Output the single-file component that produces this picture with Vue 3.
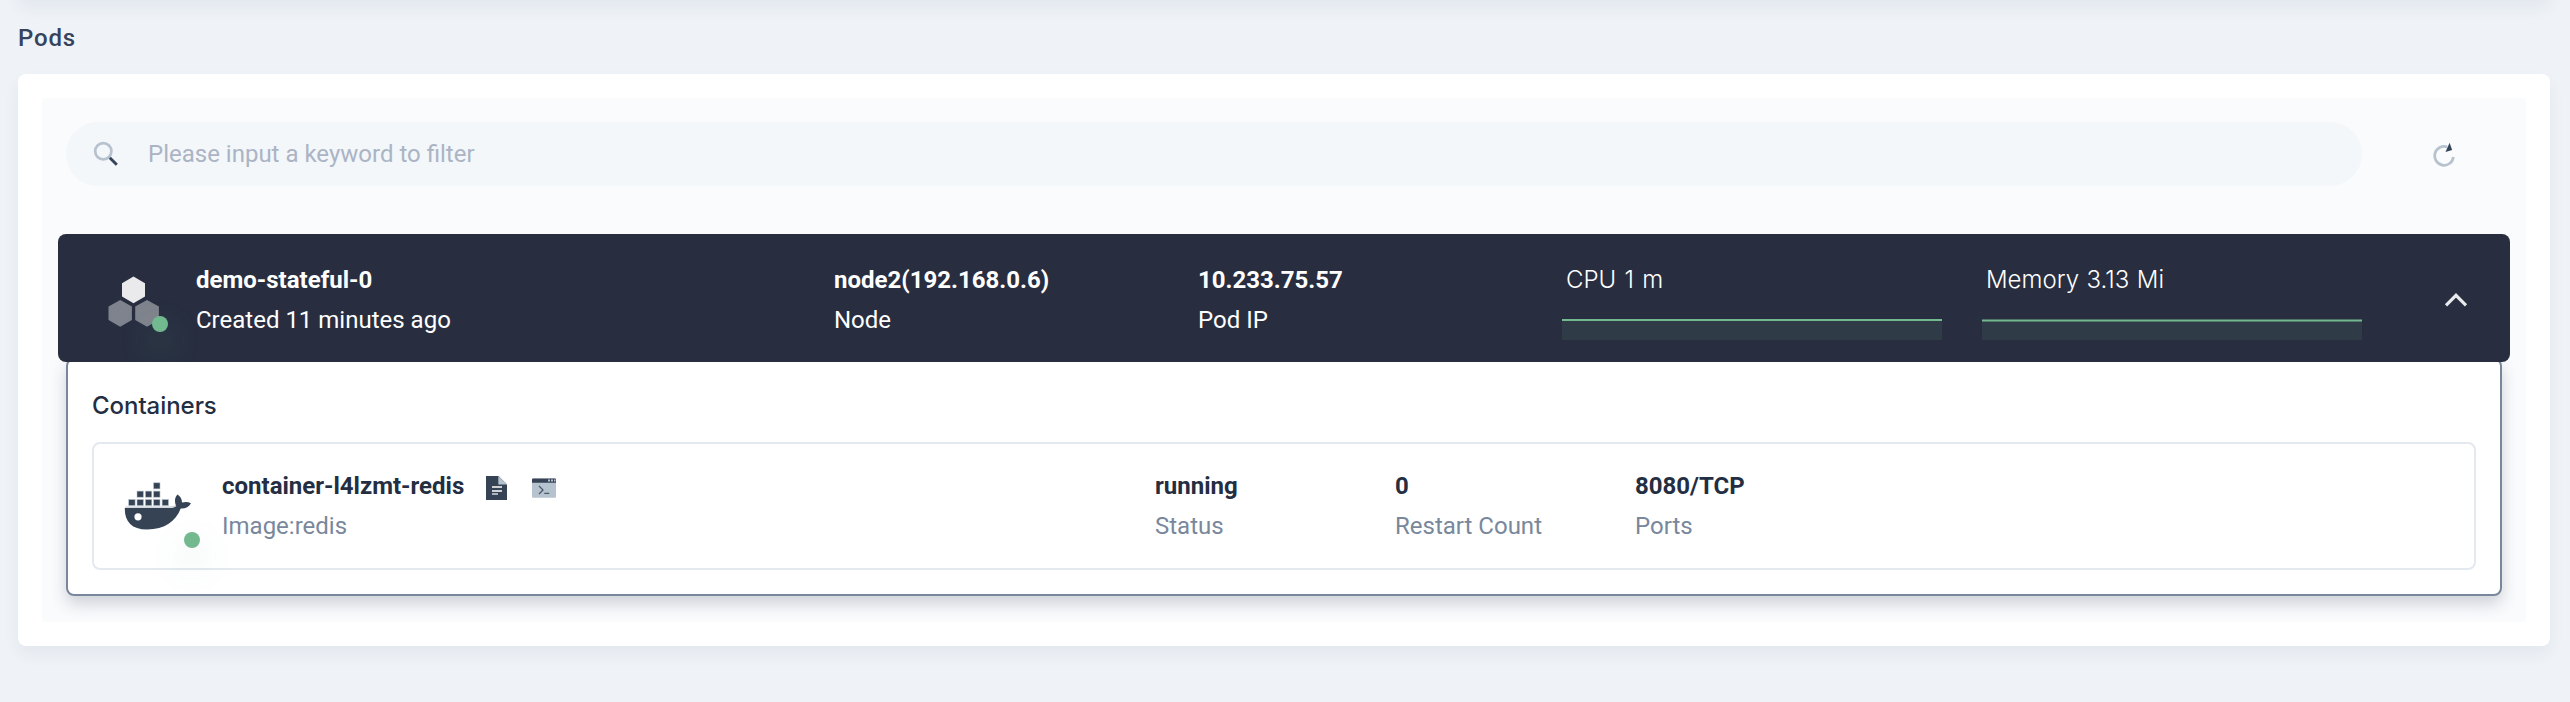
<script setup>
const containerStats = [
  { value: 'running', label: 'Status' },
  { value: '0', label: 'Restart Count' },
  { value: '8080/TCP', label: 'Ports' },
]
const boxes = [
  [153.6, 482.8],
  [137, 491.1], [145.4, 491.1], [153.6, 491.1],
  [128.7, 499.5], [137, 499.5], [145.4, 499.5], [153.6, 499.5], [162.1, 499.5],
]
</script>

<template>
  <div class="page">
    <div class="previous-card"></div>
    <h3 class="title">Pods</h3>
    <section class="card">
      <div class="body">
        <div class="toolbar">
          <div class="search">
            <svg class="search-icon" viewBox="90 138 32 32">
              <circle cx="103.3" cy="151.3" r="8.1" fill="none" stroke="#b6c2cd" stroke-width="2.7" />
              <path d="M109.8 157.8l7 7" stroke="#324558" stroke-width="2.9" fill="none" />
            </svg>
            <span class="placeholder">Please input a keyword to filter</span>
          </div>
          <svg class="refresh" viewBox="2428 138 32 32">
            <path d="M2453.4 157a9.4 9.4 0 1 1-6.2-10" fill="none" stroke="#b6c2cd" stroke-width="2.7" />
            <path d="M2449.6 142.8l2.5 7.3-6.6 1.9z" fill="#324558" />
          </svg>
        </div>

        <div class="pod-row">
          <div class="pod-icon">
            <svg viewBox="108 276 52 52">
              <path d="M133.5 276.6l11.5 6.6v13.2l-11.5 6.8-11.5-6.8v-13.2z" fill="#eaeaec" />
              <path d="M120.2 300l11.7 6.6v13.3l-11.7 6.8-11.7-6.8v-13.3z" fill="#7f838d" />
              <path d="M147 300l11.9 6.6v13.3l-11.9 6.8-11.8-6.8v-13.3z" fill="#7f838d" />
            </svg>
            <i class="dot"></i>
          </div>
          <div class="cell name"><strong>demo-stateful-0</strong><p>Created 11 minutes ago</p></div>
          <div class="cell node"><strong>node2(192.168.0.6)</strong><p>Node</p></div>
          <div class="cell ip"><strong>10.233.75.57</strong><p>Pod IP</p></div>
          <div class="metric">
            <span class="metric-label cpu">CPU 1 m</span>
            <svg class="chart" viewBox="0 0 380 22">
              <path d="M0 2h380v19H0z" fill="#2f3b46" />
              <path d="M0 1h380" stroke="#73b98f" stroke-width="2" />
            </svg>
          </div>
          <div class="metric">
            <span class="metric-label memory">Memory 3.13 Mi</span>
            <svg class="chart" viewBox="0 0 380 22">
              <path d="M0 2h380v19H0z" fill="#2f3b46" />
              <path d="M0 1.5h380" stroke="#73b98f" stroke-width="2" />
            </svg>
          </div>
          <svg class="chevron" viewBox="0 0 24 16">
            <path d="M2 13.4L12 3.3l10 10.1" fill="none" stroke="#eaeaec" stroke-width="3.1" />
          </svg>
        </div>

        <div class="details">
          <h4 class="subtitle">Containers</h4>
          <div class="container-row">
            <div class="docker">
              <svg viewBox="120 474 80 64">
                <rect v-for="(b, i) in boxes" :key="i" :x="b[0]" :y="b[1]" width="6.4" height="6.1" fill="#364355" stroke="#b6c2cd" stroke-width=".6" />
                <path d="M125.4 507.2H169c3 0 5.3-.6 7.2-1.8" fill="none" stroke="#c3ccd5" stroke-width="1.2" />
                <path d="M124.8 508.1H169.5c2.7 0 5-.6 6.8-1.9-1.9-3.9-2-8 1.1-11.6 3 1.9 4.7 4.7 4.6 8 3-.9 6-.9 9 .6-1.9 3.8-5.6 5.5-10.3 5.3C175.5 521.5 165 529.3 147 529.4c-15.5 0-22.5-8-22.2-21.3z" fill="#364355" />
                <circle cx="138" cy="516.8" r="3.6" fill="#fff" />
              </svg>
              <i class="dot"></i>
            </div>
            <div class="container-name">
              <div class="name-line">
                <strong>container-l4lzmt-redis</strong>
                <svg class="doc" viewBox="0 0 21 24">
                  <path d="M0 0h12.5L21 8.5V24H0z" fill="#364355" />
                  <path d="M12.3 0L21 8.6h-8.7z" fill="#b6c2cd" />
                  <path d="M6 10.9h10M6 14.9h10" stroke="#fff" stroke-width="1.5" />
                  <path d="M6 18h6" stroke="#b6c2cd" stroke-width="1.8" />
                </svg>
                <svg class="terminal" viewBox="0 0 24 20">
                  <rect width="24" height="19.3" y=".4" rx="1" fill="#b6c2cd" />
                  <path d="M0 4.7V1.4Q0 .4 1 .4h22q1 0 1 1v3.3z" fill="#364355" />
                  <path d="M16 2.6h2m1 0h2m1 0h1.5" stroke="#b6c2cd" stroke-width="2" />
                  <path d="M7 8l4 4-4 4M12.3 15.3h4.9" fill="none" stroke="#4a5a6b" stroke-width="1.3" />
                </svg>
              </div>
              <p>Image:redis</p>
            </div>
            <div v-for="s in containerStats" :key="s.label" class="stat">
              <strong>{{ s.value }}</strong>
              <p>{{ s.label }}</p>
            </div>
          </div>
        </div>
      </div>
    </section>
  </div>
</template>

<style>
body { background: #eff3f8; }
</style>

<style scoped>
* { box-sizing: border-box; }
.page {
  height: 702px;
  padding: 0 20px 0 18px;
  overflow: hidden;
  background: #eff3f8;
  font: 24px/40px Roboto, "Liberation Sans", sans-serif;
  color: #242e42;
}
p, h3, h4 { margin: 0; }
p { white-space: nowrap; }
svg { display: block; flex: none; }
strong { display: block; font-weight: 700; white-space: nowrap; }
.previous-card {
  height: 60px;
  margin-top: -60px;
  border-radius: 8px;
  background: #fff;
  box-shadow: 0 8px 16px rgba(36, 46, 66, .06);
}
.title { height: 74px; padding-top: 18px; font-size: 24px; font-weight: 500; color: #36435c; letter-spacing: .8px; }
.card {
  height: 572px;
  padding: 24px;
  border-radius: 8px;
  background: #fff;
  box-shadow: 0 8px 16px rgba(36, 46, 66, .06);
}
.body { height: 524px; padding: 24px 16px 0; background: #fafbfd; overflow: hidden; }
.toolbar { display: flex; align-items: center; padding-left: 8px; height: 64px; }
.search {
  display: flex;
  align-items: center;
  width: 2296px;
  height: 64px;
  padding-left: 24px;
  border-radius: 32px;
  background: #f3f7fa;
}
.search-icon { width: 32px; height: 32px; }
.placeholder { margin-left: 26px; color: #abb4c4; }
.refresh { width: 32px; height: 32px; margin-left: 66px; }
.pod-row {
  display: flex;
  position: relative;
  z-index: 1;
  height: 128px;
  margin-top: 48px;
  padding: 26px 0 0 50px;
  border-radius: 8px;
  background: #282e40;
  color: #fff;
  overflow: hidden;
}
.pod-icon { position: relative; width: 52px; height: 52px; margin-top: 16px; }
.pod-icon svg { width: 52px; height: 52px; }
.dot {
  position: absolute;
  width: 16px;
  height: 16px;
  border-radius: 50%;
  background: #72b98f;
  box-shadow: 0 16px 32px rgba(85, 188, 138, .36);
}
.pod-icon .dot { left: 44px; top: 40px; }
.name { width: 638px; margin-left: 36px; }
.node { width: 364px; }
.ip { width: 364px; }
.metric { width: 380px; margin-right: 40px; }
.metric-label {
  display: block;
  padding-left: 4px;
  font-family: Inter, Roboto, sans-serif;
  font-weight: 300;
  white-space: nowrap;
}
.cpu { word-spacing: 1.5px; }
.memory { word-spacing: .8px; }
.chart { width: 380px; height: 22px; margin-top: 19px; }
.chevron { width: 24px; height: 16px; margin: 32px 0 0 42px; }
.details {
  width: 2436px;
  height: 238px;
  margin: -4px 8px 0;
  padding: 0 24px;
  border: 2px solid #79879c;
  border-radius: 8px;
  background: #fff;
  box-shadow: 0 8px 16px rgba(36, 46, 66, .2);
}
.subtitle { height: 82px; padding-top: 26px; font: 500 24px/40px Inter, Roboto, sans-serif; letter-spacing: -.05px; }
.container-row {
  display: flex;
  height: 128px;
  padding: 22px 0 0 26px;
  border: 2px solid #e3e9ef;
  border-radius: 8px;
}
.docker { position: relative; width: 80px; height: 80px; }
.docker svg { width: 80px; height: 64px; margin-top: 8px; }
.docker .dot { left: 63.5px; top: 65.7px; box-shadow: 0 16px 32px rgba(85, 150, 120, .25); }
.container-name { width: 933px; margin-left: 22px; }
.name-line { display: flex; align-items: center; height: 40px; }
.doc { width: 21px; height: 24px; margin: 4px 0 0 22px; }
.terminal { width: 24px; height: 20px; margin: 4px 0 0 25px; }
.stat { width: 240px; }
.container-row p { color: #79879c; }
</style>
